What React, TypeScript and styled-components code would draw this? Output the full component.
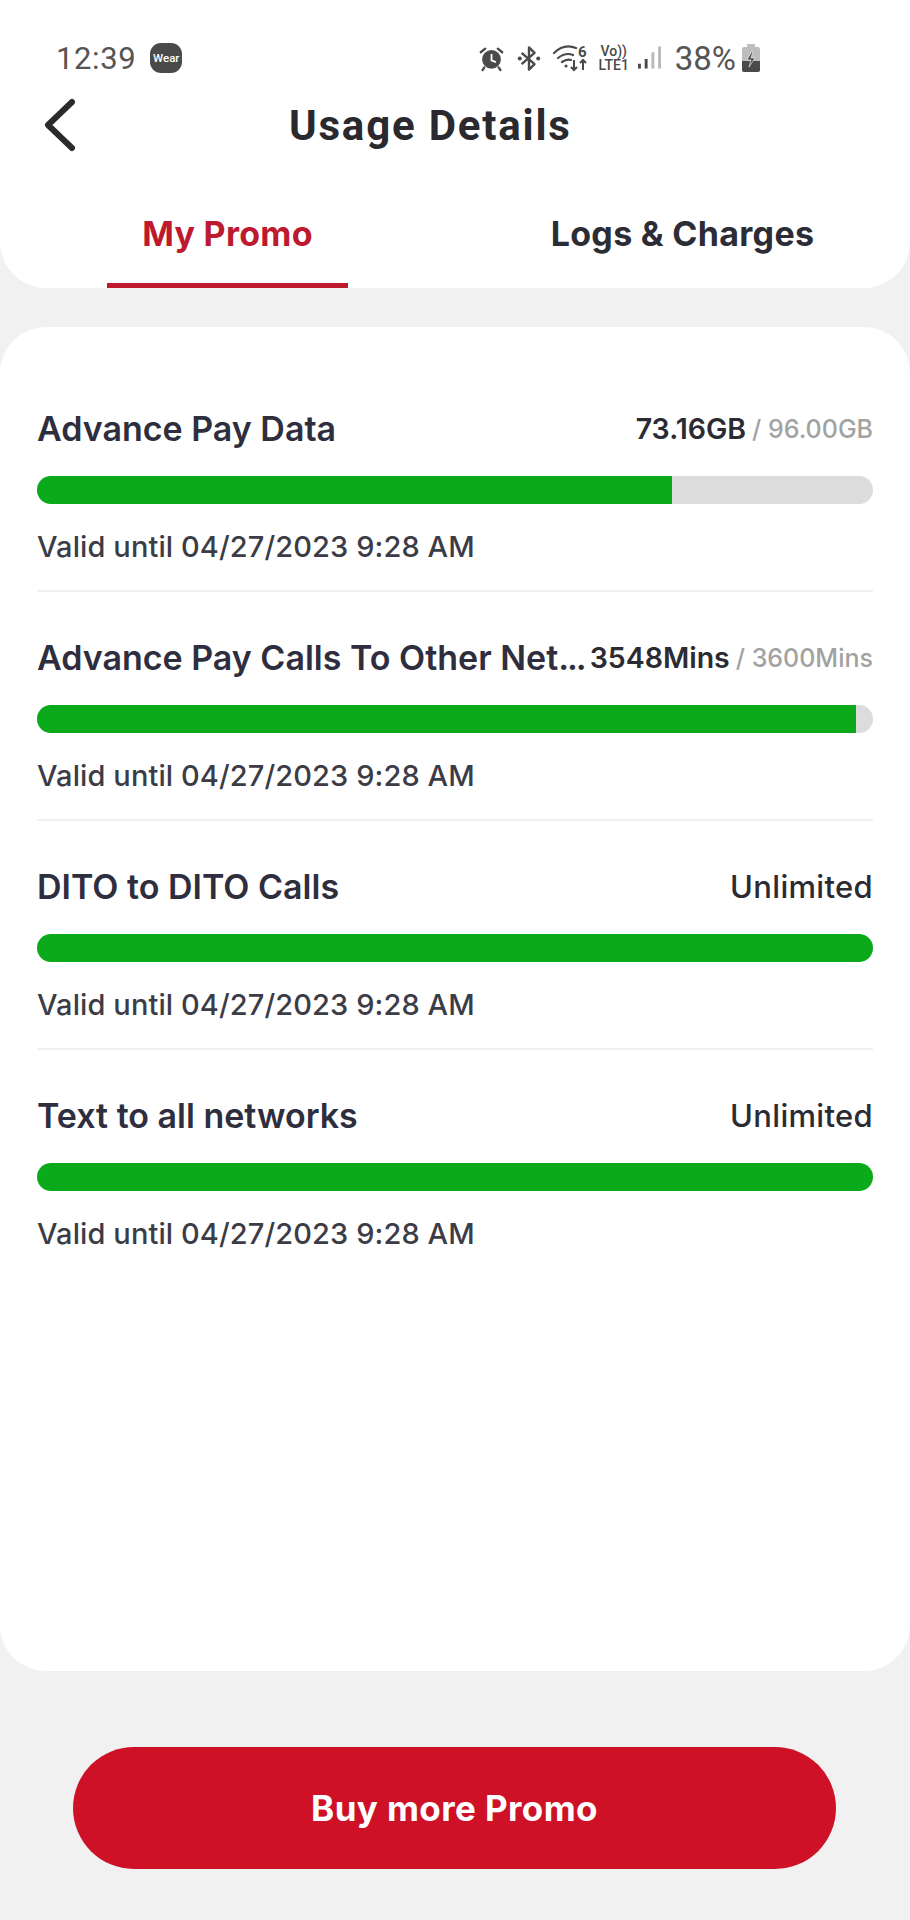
import styled, { createGlobalStyle } from 'styled-components';

const GlobalStyle = createGlobalStyle`
  html, body { margin: 0; padding: 0; background: #f1f1f1; }
  * { box-sizing: border-box; }
`;

const Page = styled.div`
  width: 910px;
  height: 1920px;
  overflow: hidden;
  background: #f1f1f1;
  font-family: Inter, 'Liberation Sans', sans-serif;
`;

const Header = styled.header`
  height: 288px;
  background: #fff;
  border-radius: 0 0 46px 46px;
  padding-top: 40px;
`;

const StatusBar = styled.div`
  height: 36px;
  padding: 0 150px 0 56px;
  display: flex;
  align-items: center;
  justify-content: space-between;
  font-family: Roboto, sans-serif;
  color: #555;
`;

const StatusGroup = styled.div`
  display: flex;
  align-items: center;
`;

const Clock = styled.span`
  font-size: 31px;
  letter-spacing: 0.6px;
  margin-right: 14px;
`;

const WearBadge = styled.span`
  width: 32px;
  height: 30px;
  border-radius: 11px;
  background: #4a4a4a;
  color: #fff;
  font-size: 11.5px;
  font-weight: 500;
  display: flex;
  align-items: center;
  justify-content: center;
`;

const Network = styled.span`
  width: 32px;
  display: flex;
  flex-direction: column;
  align-items: center;
  font-size: 14px;
  line-height: 14px;
  font-weight: 500;
  color: #4a4a4a;
  margin: 0 8px 0 11px;
`;

const Percent = styled.span`
  font-size: 33px;
  margin: 0 6px 0 14px;
`;

const TitleBar = styled.div`
  height: 70px;
  margin-top: 14px;
  padding-left: 43px;
  display: flex;
  align-items: center;
`;

const Title = styled.h1`
  margin: 0 0 0 212px;
  font-family: Roboto, sans-serif;
  font-size: 42px;
  font-weight: 700;
  letter-spacing: 1.8px;
  color: #2a2a2e;
`;

const Tabs = styled.nav`
  display: grid;
  grid-template-columns: 1fr 1fr;
  margin-top: 30px;
`;

const Tab = styled.div<{ $active?: boolean }>`
  height: 98px;
  padding-top: 22px;
  display: flex;
  justify-content: center;
  position: relative;
  font-size: 34px;
  font-weight: 700;
  letter-spacing: 0.3px;
  line-height: 44px;
  color: ${(p) => (p.$active ? '#bd1a2f' : '#2c2c36')};

  ${(p) =>
    p.$active &&
    `&::after {
      content: "";
      position: absolute;
      left: 107px;
      bottom: 0;
      width: 241px;
      height: 5px;
      background: #bd1a2f;
    }`}
`;

const Card = styled.section`
  height: 1344px;
  margin-top: 39px;
  padding: 36px 37px 0;
  background: #fff;
  border-radius: 46px;
`;

const Row = styled.article<{ $last?: boolean }>`
  height: 229px;
  padding-top: 48px;
  border-bottom: ${(p) => (p.$last ? 'none' : '2px solid #f0f0f0')};
`;

const RowTop = styled.div`
  display: flex;
  align-items: center;
  justify-content: space-between;
  height: 35px;
  white-space: nowrap;
`;

const Name = styled.span`
  font-size: 34px;
  font-weight: 600;
  color: #2e2e3e;
`;

const Dots = styled.span`
  letter-spacing: -2px;
`;

const Amount = styled.span<{ $plain?: boolean }>`
  display: flex;
  align-items: center;
  font-size: ${(p) => (p.$plain ? '31px' : '28.5px')};
  font-weight: ${(p) => (p.$plain ? 500 : 600)};
  letter-spacing: ${(p) => (p.$plain ? '0.3px' : '0')};
  color: #2b2b33;
`;

const Limit = styled.span`
  font-size: 25px;
  font-weight: 500;
  color: #a2a2a2;
  margin-left: 6px;
`;

const Track = styled.div`
  height: 28px;
  margin-top: 30px;
  border-radius: 14px;
  background: #dcdcdc;
  overflow: hidden;
`;

const Fill = styled.div`
  height: 100%;
  background: #0aaa1a;
`;

const Valid = styled.p`
  margin: 23px 0 0;
  font-size: 29px;
  font-weight: 500;
  letter-spacing: 0.1px;
  line-height: 40px;
  color: #3c3c46;
`;

const Footer = styled.div`
  padding: 76px 74px 0 73px;
`;

const BuyButton = styled.button`
  width: 100%;
  height: 122px;
  border: none;
  border-radius: 61px;
  background: #ce1126;
  color: #fff;
  font-family: inherit;
  font-size: 35px;
  font-weight: 700;
  letter-spacing: 0.4px;
`;

const BackIcon = () => (
  <svg width="34" height="54" viewBox="0 0 34 54" fill="none">
    <path d="M29 4 L5 27 L29 50" stroke="#2b2b2b" strokeWidth="6" strokeLinecap="round" strokeLinejoin="round" />
  </svg>
);

const AlarmIcon = () => (
  <svg width="25" height="27" viewBox="0 0 28 28" fill="none">
    <circle cx="14" cy="15" r="10.5" fill="#4a4a4a" />
    <path d="M14 9v7l5 2" stroke="#fff" strokeWidth="2" />
    <path d="M2 7l5-4M26 7l-5-4M6 24l-2 3M22 24l2 3" stroke="#4a4a4a" strokeWidth="2.6" strokeLinecap="round" />
  </svg>
);

const BluetoothIcon = () => (
  <svg width="24" height="27" viewBox="0 0 26 28" fill="none" style={{ marginLeft: 13 }}>
    <path d="M5 8l14 12-6 6V2l6 6L5 20" stroke="#4a4a4a" strokeWidth="2.6" strokeLinejoin="round" />
    <circle cx="3" cy="14" r="2.2" fill="#4a4a4a" />
    <circle cx="23" cy="14" r="2.2" fill="#4a4a4a" />
  </svg>
);

const WifiIcon = () => (
  <svg width="34" height="28" viewBox="0 0 34 28" fill="none" style={{ marginLeft: 12 }}>
    <path d="M1 9C8 2 16 1 23 4M5 14c5-4 10-5 15-3M9 18c3-2 6-3 9-2" stroke="#4a4a4a" strokeWidth="2.2" strokeLinecap="round" />
    <circle cx="13" cy="22" r="1.6" fill="#4a4a4a" />
    <path d="M21 16v10M18 23l3 3 3-3M30 26V16M27 19l3-3 3 3" stroke="#4a4a4a" strokeWidth="2" />
    <text x="25" y="13" fontSize="15" fontWeight="700" fontFamily="Roboto, sans-serif" fill="#4a4a4a">6</text>
  </svg>
);

const SignalIcon = () => (
  <svg width="23" height="28" viewBox="0 0 24 28">
    <rect x="0" y="20" width="3" height="5" fill="#4a4a4a" />
    <rect x="7" y="15" width="3" height="10" fill="#4a4a4a" />
    <rect x="14" y="8" width="3" height="17" fill="#b9b9b9" />
    <rect x="21" y="2" width="3" height="23" fill="#b9b9b9" />
  </svg>
);

const BatteryIcon = () => (
  <svg width="18" height="28" viewBox="0 0 18 28">
    <rect x="5" y="0" width="8" height="3" fill="#bdbdbd" />
    <rect x="0" y="3" width="18" height="25" rx="2" fill="#bdbdbd" />
    <path d="M0 17h18v9a2 2 0 0 1-2 2H2a2 2 0 0 1-2-2z" fill="#4a4a4a" />
    <path d="M10 7l-5 9h4l-2 7 6-9h-4l2-7z" fill="#4a4a4a" stroke="#fff" strokeWidth="0.6" />
  </svg>
);

type Usage = {
  name: string;
  truncated?: boolean;
  used: string;
  limit?: string;
  percent: number;
};

const VALID_UNTIL = 'Valid until 04/27/2023 9:28 AM';

const usages: Usage[] = [
  { name: 'Advance Pay Data', used: '73.16GB', limit: '/ 96.00GB', percent: 76 },
  { name: 'Advance Pay Calls To Other Net', truncated: true, used: '3548Mins', limit: '/ 3600Mins', percent: 98 },
  { name: 'DITO to DITO Calls', used: 'Unlimited', percent: 100 },
  { name: 'Text to all networks', used: 'Unlimited', percent: 100 },
];

export default function App() {
  return (
    <Page>
      <GlobalStyle />
      <Header>
        <StatusBar>
          <StatusGroup>
            <Clock>12:39</Clock>
            <WearBadge>Wear</WearBadge>
          </StatusGroup>
          <StatusGroup>
            <AlarmIcon />
            <BluetoothIcon />
            <WifiIcon />
            <Network>
              <span>Vo))</span>
              <span>LTE1</span>
            </Network>
            <SignalIcon />
            <Percent>38%</Percent>
            <BatteryIcon />
          </StatusGroup>
        </StatusBar>
        <TitleBar>
          <BackIcon />
          <Title>Usage Details</Title>
        </TitleBar>
        <Tabs>
          <Tab $active>My Promo</Tab>
          <Tab>Logs &amp; Charges</Tab>
        </Tabs>
      </Header>

      <Card>
        {usages.map((usage, index) => (
          <Row key={usage.name} $last={index === usages.length - 1}>
            <RowTop>
              <Name>
                {usage.name}
                {usage.truncated && <Dots>...</Dots>}
              </Name>
              <Amount $plain={!usage.limit}>
                {usage.used}
                {usage.limit && <Limit>{usage.limit}</Limit>}
              </Amount>
            </RowTop>
            <Track>
              <Fill style={{ width: `${usage.percent}%` }} />
            </Track>
            <Valid>{VALID_UNTIL}</Valid>
          </Row>
        ))}
      </Card>

      <Footer>
        <BuyButton>Buy more Promo</BuyButton>
      </Footer>
    </Page>
  );
}
